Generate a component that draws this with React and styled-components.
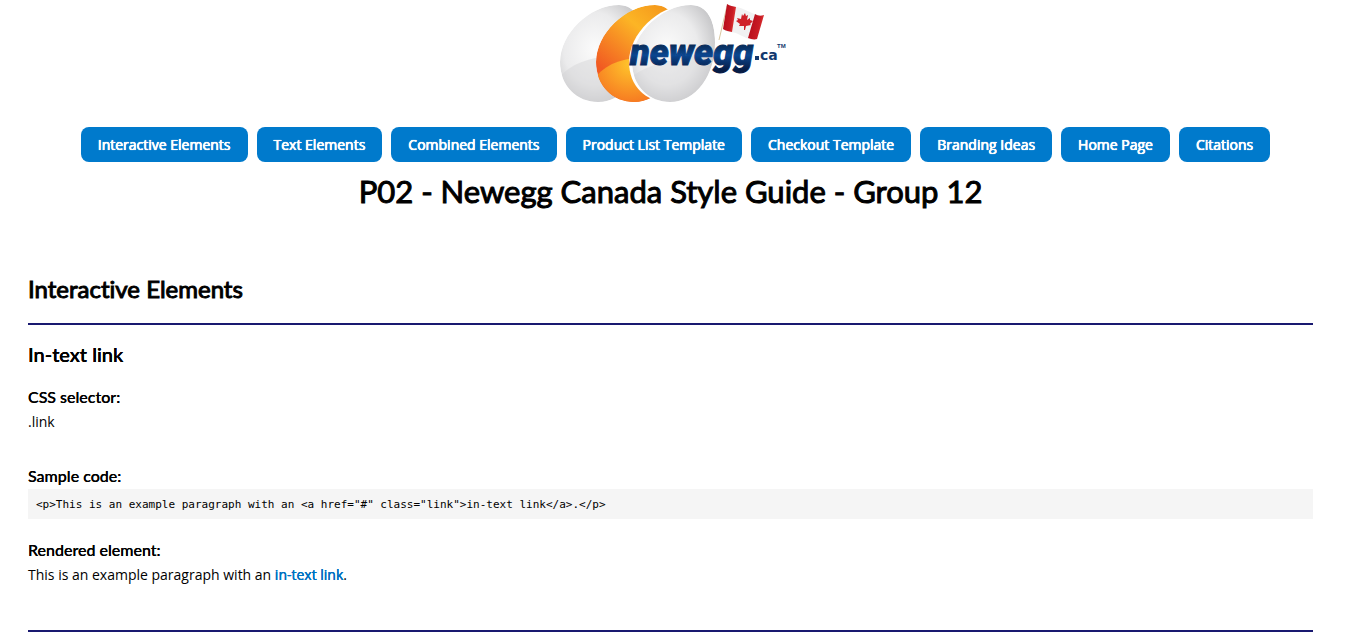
import React from "react";
import styled, { createGlobalStyle } from "styled-components";

const GlobalStyle = createGlobalStyle`
  * { box-sizing: border-box; }
  body {
    margin: 0;
    background: #fff;
    color: #000;
    font-family: "Open Sans", sans-serif;
    font-size: 14px;
    line-height: 20px;
  }
`;

const Page = styled.div`
  padding: 0 32px 0 28px;
`;

const Header = styled.header`
  display: flex;
  flex-direction: column;
  align-items: center;
`;

const LogoArt = styled.svg`
  display: block;
  width: 240px;
  height: 110px;
`;

const Nav = styled.nav`
  display: flex;
  flex-wrap: wrap;
  justify-content: center;
  gap: 9px;
  padding: 17px 0 0 10px;
`;

const NavLink = styled.a`
  padding: 8px 17px;
  border-radius: 8px;
  background: #007acc;
  color: #fff;
  line-height: 19px;
  text-shadow: 0 0 currentColor, 0 0 currentColor, 0 0 1px currentColor;
  text-decoration: none;
  white-space: nowrap;
`;

const Title = styled.h1`
  margin: 9px 0 0;
  font: 400 31px/40px Lato, sans-serif;
  -webkit-text-stroke: 1px currentColor;
`;

const Section = styled.section`
  margin-top: 62px;
`;

const SectionTitle = styled.h2`
  margin: 0;
  font: 400 24px/32px Lato, sans-serif;
  font-variant-ligatures: none;
  -webkit-text-stroke: 1px currentColor;
`;

const Divider = styled.hr`
  height: 2px;
  margin: ${(p) => p.$top}px 0 0;
  border: 0;
  background: #191970;
`;

const ElementTitle = styled.h3`
  margin: 17px 0 0;
  font: 500 20px/24px Lato, sans-serif;
  text-shadow: 0 0 currentColor, 0 0 currentColor;
`;

const Label = styled.h4`
  margin: ${(p) => p.$top}px 0 0;
  font: 500 16px/20px Lato, sans-serif;
  text-shadow: 0 0 currentColor;
`;

const Text = styled.p`
  margin: 5px 0 0;
`;

const Code = styled.pre`
  margin: 3px 0 0;
  padding: 9px 8px 7px;
  background: #f5f5f5;
  font: 11px/14px "DejaVu Sans Mono", monospace;
`;

const TextLink = styled.a`
  color: #0072c2;
  text-shadow: 0 0 currentColor, 0 0 currentColor;
  text-decoration: none;
`;

const links = [
  "Interactive Elements",
  "Text Elements",
  "Combined Elements",
  "Product List Template",
  "Checkout Template",
  "Branding Ideas",
  "Home Page",
  "Citations",
];

function Logo() {
  return (
    <LogoArt viewBox="0 0 240 110" role="img" aria-label="Newegg Canada">
      <defs>
        <radialGradient id="silver" cx="42%" cy="45%" r="62%">
          <stop offset="0" stopColor="#fbfbfb" />
          <stop offset="0.6" stopColor="#ebebec" />
          <stop offset="1" stopColor="#c6c6c8" />
        </radialGradient>
        <linearGradient id="orange" x1="0.75" y1="0" x2="0.2" y2="0.75">
          <stop offset="0" stopColor="#f59a1c" />
          <stop offset="0.35" stopColor="#fcb525" />
          <stop offset="1" stopColor="#f15a22" />
        </linearGradient>
        <radialGradient id="glow" cx="62%" cy="15%" r="90%">
          <stop offset="0" stopColor="#ffc52b" />
          <stop offset="1" stopColor="#f4671f" />
        </radialGradient>
        <linearGradient id="navy" x1="0" y1="0" x2="0" y2="1">
          <stop offset="0.2" stopColor="#07203f" />
          <stop offset="0.55" stopColor="#0b4690" />
          <stop offset="0.9" stopColor="#061c45" />
        </linearGradient>
        <linearGradient id="cloth" x1="0" y1="0" x2="1" y2="0.3">
          <stop offset="0" stopColor="#d8292f" />
          <stop offset="0.15" stopColor="#e33b3c" />
          <stop offset="0.28" stopColor="#b90f1c" />
          <stop offset="0.75" stopColor="#c91b24" />
          <stop offset="1" stopColor="#e13a38" />
        </linearGradient>
        <path
          id="egg"
          d="M68 5C38 5 9 34 9 62C9 86 26 102 47 102C73 102 92 75 92 43C92 20 84 5 68 5Z"
        />
        <clipPath id="eggClip">
          <use href="#egg" />
        </clipPath>
      </defs>
      <g clipPath="url(#eggClip)">
        <use href="#egg" fill="url(#silver)" />
        <path d="M8 78C22 61 42 57 70 55V110H8Z" fill="#d2d2d4" opacity="0.45" />
      </g>
      <g transform="translate(36 0)" clipPath="url(#eggClip)">
        <use href="#egg" fill="url(#orange)" />
        <path d="M8 78C20 62 38 58 65 56V110H8Z" fill="url(#glow)" />
      </g>
      <use href="#egg" x="69" fill="#fff" />
      <g transform="translate(72 0)" clipPath="url(#eggClip)">
        <use href="#egg" fill="url(#silver)" />
        <path d="M8 78C25 62 50 62 92 50V110H8Z" fill="#d2d2d4" opacity="0.35" />
      </g>
      <path d="M176 6L168 40" stroke="#d9c7a0" strokeWidth="1" />
      <path d="M176 4C181 7 186 6 192 9C199 12 205 16 213 15L206 39C199 41 194 37 187 34C181 31 176 33 172 29Z" fill="#f1f1f2" />
      <path d="M176 4C179 6 182 6 185 7L181 32C178 31 175 31 172 29Z" fill="url(#cloth)" />
      <path d="M204 14C207 16 210 16 213 15L206 39C203 40 200 39 197 38Z" fill="url(#cloth)" />
      <path
        d="M194 13L195 16L197 15L196 20L199 18L199 20L202 21L199 24L200 25L195 26L194 30L193 30L193 26L188 26L189 24L185 21L187 20L186 18L190 19L191 14L192 16Z"
        fill="#cf2029"
      />
      <text
        x="79"
        y="65"
        fontFamily="Roboto, sans-serif"
        fontSize="36"
        fontWeight="900"
        fontStyle="italic"
        fill="url(#navy)"
        stroke="url(#navy)"
        strokeWidth="1"
      >
        newegg
      </text>
      <rect x="204" y="56" width="4" height="4" fill="#12386e" />
      <text x="209" y="60" fontFamily="DejaVu Sans, sans-serif" fontSize="14" fontWeight="700" fill="#12386e">
        ca
      </text>
      <text x="226" y="48" fontFamily="Liberation Sans, sans-serif" fontSize="6" fontWeight="700" fill="#12386e">
        TM
      </text>
    </LogoArt>
  );
}

export default function App() {
  return (
    <>
      <GlobalStyle />
      <Page>
        <Header>
          <Logo />
          <Nav aria-label="Sections">
            {links.map((name) => (
              <NavLink key={name} href="#">
                {name}
              </NavLink>
            ))}
          </Nav>
          <Title>P02 - Newegg Canada Style Guide - Group 12</Title>
        </Header>
        <Section>
          <SectionTitle>Interactive Elements</SectionTitle>
          <Divider $top={18} />
          <ElementTitle>In-text link</ElementTitle>
          <Label $top={21}>CSS selector:</Label>
          <Text>.link</Text>
          <Label $top={34}>Sample code:</Label>
          <Code>{'<p>This is an example paragraph with an <a href="#" class="link">in-text link</a>.</p>'}</Code>
          <Label $top={21}>Rendered element:</Label>
          <Text>
            This is an example paragraph with an <TextLink href="#">in-text link</TextLink>.
          </Text>
          <Divider $top={45} />
        </Section>
      </Page>
    </>
  );
}
